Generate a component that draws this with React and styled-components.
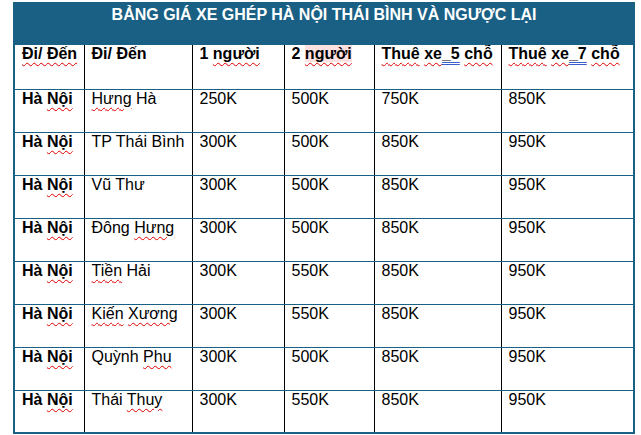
import React from "react";
import styled, { createGlobalStyle } from "styled-components";

const Global = createGlobalStyle`
  html, body { margin: 0; padding: 0; background: #ffffff; }
  body { font-family: "Liberation Sans", Arial, sans-serif; }
`;

const Page = styled.div`
  padding: 2px 0 0 13px;
`;

const Table = styled.table`
  width: 620px;
  border-collapse: collapse;
  table-layout: fixed;
  border: 2px solid #1a5f84;
  font-family: "Liberation Sans", Arial, sans-serif;
  font-size: 16px;
  line-height: 18px;
  color: #000;
`;

const TitleCell = styled.th`
  background: #1a5f84;
  color: #ffffff;
  font-weight: bold;
  font-size: 16px;
  text-align: center;
  vertical-align: top;
  height: 42px;
  padding: 2px 0 0 0;
  box-sizing: border-box;
  border: none;
`;

const Row = styled.tr`
  height: ${(p) => (p.$head ? 44 : 43)}px;
`;

const Cell = styled.td`
  vertical-align: top;
  padding: 0 4px 0 7px;
  text-align: left;
  font-weight: ${(p) => (p.$bold ? "bold" : "normal")};
  border-left: 1px solid #000;
  border-right: 1px solid #000;
  border-bottom: 1.5px solid #1a5f84;
  white-space: nowrap;
  overflow: hidden;
`;

const Wavy = styled.span`
  text-decoration-line: underline;
  text-decoration-style: wavy;
  text-decoration-color: #e00000;
  text-decoration-thickness: 1px;
  text-underline-offset: 3px;
`;

const Grammar = styled.span`
  text-decoration-line: underline;
  text-decoration-style: double;
  text-decoration-color: #3a5fcd;
  text-decoration-thickness: 1px;
  text-underline-offset: 3px;
`;

const Mark = styled.span`
  background: #fde0e0;
`;

const widths = [70, 108, 92, 90, 127, 133];

const rows = [
  [<Wavy>Hưng</Wavy>, " Hà"],
  ["TP Thái Bình"],
  ["Vũ Thư"],
  ["Đông ", <Wavy>Hưng</Wavy>],
  [<Wavy>Tiền</Wavy>, " Hải"],
  [<Wavy>Kiến</Wavy>, " ", <Wavy>Xương</Wavy>],
  ["Quỳnh ", <Wavy>Phu</Wavy>],
  ["Thái ", <Wavy>Thuy</Wavy>],
];

const prices = [
  ["250K", "500K", "750K", "850K"],
  ["300K", "500K", "850K", "950K"],
  ["300K", "500K", "850K", "950K"],
  ["300K", "500K", "850K", "950K"],
  ["300K", "550K", "850K", "950K"],
  ["300K", "550K", "850K", "950K"],
  ["300K", "500K", "850K", "950K"],
  ["300K", "550K", "850K", "950K"],
];

export default function App() {
  return (
    <>
      <Global />
      <Page>
        <Table>
          <colgroup>
            {widths.map((w, i) => (
              <col key={i} style={{ width: w }} />
            ))}
          </colgroup>
          <thead>
            <tr>
              <TitleCell colSpan={6}>
                BẢNG GIÁ XE GHÉP HÀ NỘI THÁI BÌNH VÀ NGƯỢC LẠI
              </TitleCell>
            </tr>
          </thead>
          <tbody>
            <Row $head>
              <Cell $bold>
                <Wavy>Đi/ Đến</Wavy>
              </Cell>
              <Cell $bold>Đi/ Đến</Cell>
              <Cell $bold>
                1 <Wavy>người</Wavy>
              </Cell>
              <Cell $bold>
                2{" "}
                <Mark>
                  <Wavy>người</Wavy>
                </Mark>
              </Cell>
              <Cell $bold>
                <Wavy>Thuê</Wavy> <Wavy>xe</Wavy>
                <Grammar>_5</Grammar> <Wavy>chỗ</Wavy>
              </Cell>
              <Cell $bold>
                <Wavy>Thuê</Wavy> <Wavy>xe</Wavy>
                <Grammar>_7</Grammar> <Wavy>chỗ</Wavy>
              </Cell>
            </Row>
            {rows.map((dest, i) => (
              <Row key={i}>
                <Cell $bold>
                  Hà <Wavy>Nội</Wavy>
                </Cell>
                <Cell>
                  {dest.map((d, j) => (
                    <React.Fragment key={j}>{d}</React.Fragment>
                  ))}
                </Cell>
                {prices[i].map((p, j) => (
                  <Cell key={j}>{p}</Cell>
                ))}
              </Row>
            ))}
          </tbody>
        </Table>
      </Page>
    </>
  );
}
